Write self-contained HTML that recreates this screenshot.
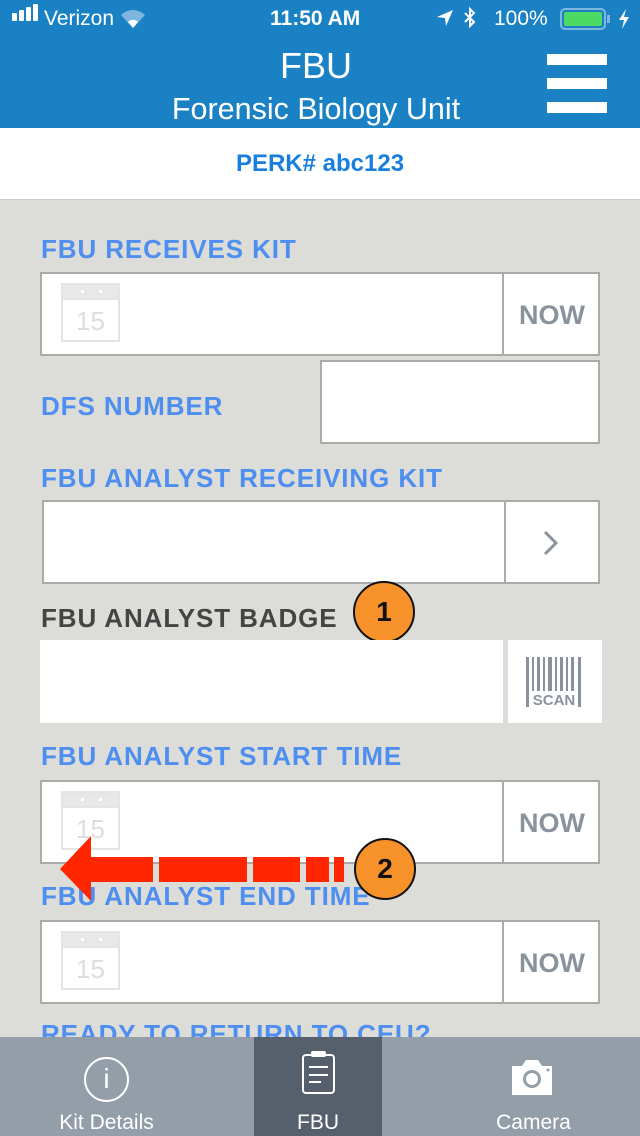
<!DOCTYPE html>
<html><head><meta charset="utf-8"><style>
*{margin:0;padding:0;box-sizing:border-box}
body{width:640px;height:1136px;overflow:hidden;background:#dcdcd8;font-family:"Liberation Sans",sans-serif;position:relative}
.a{position:absolute}
.lbl{position:absolute;left:41px;font-weight:bold;font-size:26px;color:#4d8ef0;letter-spacing:0.9px}
.box{position:absolute;background:#fff;border:2px solid #aaa}
.div{position:absolute;top:0;bottom:0;width:2px;background:#aaa}
.now{position:absolute;font-weight:bold;font-size:27px;color:#8a939d}
.cal{position:absolute;width:59px;height:59px;background:#e8e8e8;border:2px solid #e4e4e4}
.cal .in{position:absolute;left:0;right:0;top:13px;bottom:0;background:#fff;border-top:2px solid #e4e4e4;color:#ddd;font-size:26px;text-align:center;line-height:42px}
.cal i{position:absolute;top:5px;width:3px;height:3px;background:#fff}
.circ{position:absolute;width:62px;height:62px;border-radius:50%;background:#f7922a;border:2px solid #111;text-align:center;line-height:58px;font-weight:bold;font-size:28px;color:#111}
</style></head><body>
<div class="a" style="left:0;top:0;width:640px;height:128px;background:#1a82c4;color:#fff">
 <div class="a" style="left:12px;top:13px;width:5px;height:8px;background:#fff;border-radius:1px"></div>
 <div class="a" style="left:19px;top:10px;width:5px;height:11px;background:#fff;border-radius:1px"></div>
 <div class="a" style="left:26px;top:7px;width:5px;height:14px;background:#fff;border-radius:1px"></div>
 <div class="a" style="left:33px;top:4px;width:5px;height:17px;background:#fff;border-radius:1px"></div>
 <div class="a" style="left:44px;top:7px;font-size:21px">Verizon</div>
 <svg class="a" style="left:120px;top:8px" width="26" height="22" viewBox="0 0 26 22"><path d="M13 20 L1 7 A17 17 0 0 1 25 7 Z" fill="#7fb6e0"/><path d="M13 20 L8 14 A7 7 0 0 1 18 14 Z" fill="#fff"/></svg>
 <div class="a" style="left:270px;top:7px;font-size:21px;font-weight:bold">11:50 AM</div>
 <svg class="a" style="left:436px;top:9px" width="18" height="18"><path d="M17 1 L1 8 L9 9 L10 17 Z" fill="#fff"/></svg>
 <svg class="a" style="left:463px;top:6px" width="14" height="24"><path d="M2 7 L11 16 L7 20 V3 L11 7 L2 16" stroke="#fff" stroke-width="2" fill="none"/></svg>
 <div class="a" style="left:494px;top:7px;font-size:21px">100%</div>
 <div class="a" style="left:560px;top:8px;width:46px;height:22px;border:2px solid #7fb6e0;border-radius:5px;padding:2px"><div style="width:100%;height:100%;background:#4cd964;border-radius:2px"></div></div>
 <div class="a" style="left:607px;top:15px;width:3px;height:8px;background:#7fb6e0"></div>
 <svg class="a" style="left:618px;top:9px" width="12" height="20"><path d="M8 0 L1 11 H6 L4 20 L11 8 H6 Z" fill="#fff"/></svg>
 <div class="a" style="left:0;width:632px;top:45px;text-align:center;font-size:36px">FBU</div>
 <div class="a" style="left:0;width:632px;top:92px;text-align:center;font-size:30.5px">Forensic Biology Unit</div>
 <div class="a" style="left:547px;top:54px;width:60px;height:11px;background:#fff"></div>
 <div class="a" style="left:547px;top:78px;width:60px;height:11px;background:#fff"></div>
 <div class="a" style="left:547px;top:102px;width:60px;height:11px;background:#fff"></div>
</div>
<div class="a" style="left:0;top:128px;width:640px;height:72px;background:#fff;border-bottom:1px solid #ccc;text-align:center;line-height:72px;font-weight:bold;font-size:24px;color:#1a7ee0">PERK# abc123</div>

<div class="lbl" style="top:234px">FBU RECEIVES KIT</div>
<div class="box" style="left:40px;top:272px;width:560px;height:84px">
 <div class="cal" style="left:19px;top:9px"><i style="left:18px"></i><i style="left:36px"></i><div class="in">15</div></div>
 <div class="div" style="left:460px"></div><div class="now" style="left:477px;top:26px">NOW</div></div>

<div class="lbl" style="top:391px">DFS NUMBER</div>
<div class="box" style="left:320px;top:360px;width:280px;height:84px"></div>

<div class="lbl" style="top:463px">FBU ANALYST RECEIVING KIT</div>
<div class="box" style="left:42px;top:500px;width:558px;height:84px"><div class="div" style="left:460px"></div>
 <svg class="a" style="left:497px;top:27px" width="20" height="30"><path d="M4 3 L15 14 L4 25" stroke="#8a939d" stroke-width="3" fill="none"/></svg></div>

<div class="lbl" style="top:603px;color:#444">FBU ANALYST BADGE</div>
<div class="circ" style="left:353px;top:581px">1</div>
<div class="a" style="left:40px;top:640px;width:463px;height:83px;background:#fff"></div>
<div class="a" style="left:508px;top:640px;width:94px;height:83px;background:#fff">
 <svg class="a" style="left:18px;top:17px" width="60" height="50">
  <g fill="#8a939d"><rect x="0" y="0" width="3" height="50"/><rect x="6" y="0" width="2" height="34"/><rect x="11" y="0" width="3" height="34"/><rect x="17" y="0" width="2" height="34"/><rect x="22" y="0" width="4" height="34"/><rect x="29" y="0" width="2" height="34"/><rect x="34" y="0" width="3" height="34"/><rect x="40" y="0" width="2" height="34"/><rect x="45" y="0" width="3" height="34"/><rect x="52" y="0" width="3" height="50"/></g>
  <text x="28" y="48" text-anchor="middle" font-family="Liberation Sans" font-weight="bold" font-size="15" fill="#8a939d">SCAN</text></svg></div>

<div class="lbl" style="top:741px">FBU ANALYST START TIME</div>
<div class="box" style="left:40px;top:780px;width:560px;height:84px">
 <div class="cal" style="left:19px;top:9px"><i style="left:18px"></i><i style="left:36px"></i><div class="in">15</div></div>
 <div class="div" style="left:460px"></div><div class="now" style="left:477px;top:26px">NOW</div></div>

<div class="lbl" style="top:881px">FBU ANALYST END TIME</div>
<div class="box" style="left:40px;top:920px;width:560px;height:84px">
 <div class="cal" style="left:19px;top:9px"><i style="left:18px"></i><i style="left:36px"></i><div class="in">15</div></div>
 <div class="div" style="left:460px"></div><div class="now" style="left:477px;top:26px">NOW</div></div>

<div class="lbl" style="top:1019px">READY TO RETURN TO CEU?</div>

<svg class="a" style="left:0;top:830px" width="360" height="80">
 <g fill="#ff2600"><path d="M60 39 L91 6 V71 Z"/><rect x="90" y="27" width="63" height="25"/><rect x="159" y="27" width="88" height="25"/><rect x="253" y="27" width="47" height="25"/><rect x="306" y="27" width="23" height="25"/><rect x="334" y="27" width="10" height="25"/></g></svg>
<div class="circ" style="left:354px;top:838px">2</div>

<div class="a" style="left:0;top:1037px;width:640px;height:99px;background:#939ea9;color:#fff">
 <div class="a" style="left:254px;top:0;width:128px;height:99px;background:#56606d"></div>
 <div class="a" style="left:84px;top:20px;width:45px;height:45px;border:2px solid #fff;border-radius:50%;text-align:center;font-size:28px;line-height:40px">i</div>
 <div class="a" style="left:0;width:213px;top:74px;text-align:center;font-size:21px">Kit Details</div>
 <svg class="a" style="left:301px;top:8px" width="36" height="50"><rect x="2" y="10" width="31" height="38" rx="3" fill="none" stroke="#fff" stroke-width="2"/><rect x="10" y="6" width="15" height="6" rx="2" fill="#fff"/><path d="M8 22H27M8 30H27M8 37H20" stroke="#fff" stroke-width="2"/></svg>
 <div class="a" style="left:254px;width:128px;top:74px;text-align:center;font-size:21px">FBU</div>
 <svg class="a" style="left:509px;top:20px" width="46" height="40"><path d="M3 9 H13 L17 3 H29 L33 9 H43 V38 H3 Z" fill="#fff"/><circle cx="23" cy="22" r="9" fill="#939ea9"/><circle cx="23" cy="22" r="6" fill="#fff"/><circle cx="39" cy="13" r="1.5" fill="#939ea9"/></svg>
 <div class="a" style="left:427px;width:213px;top:74px;text-align:center;font-size:21px">Camera</div>
</div>
</body></html>
